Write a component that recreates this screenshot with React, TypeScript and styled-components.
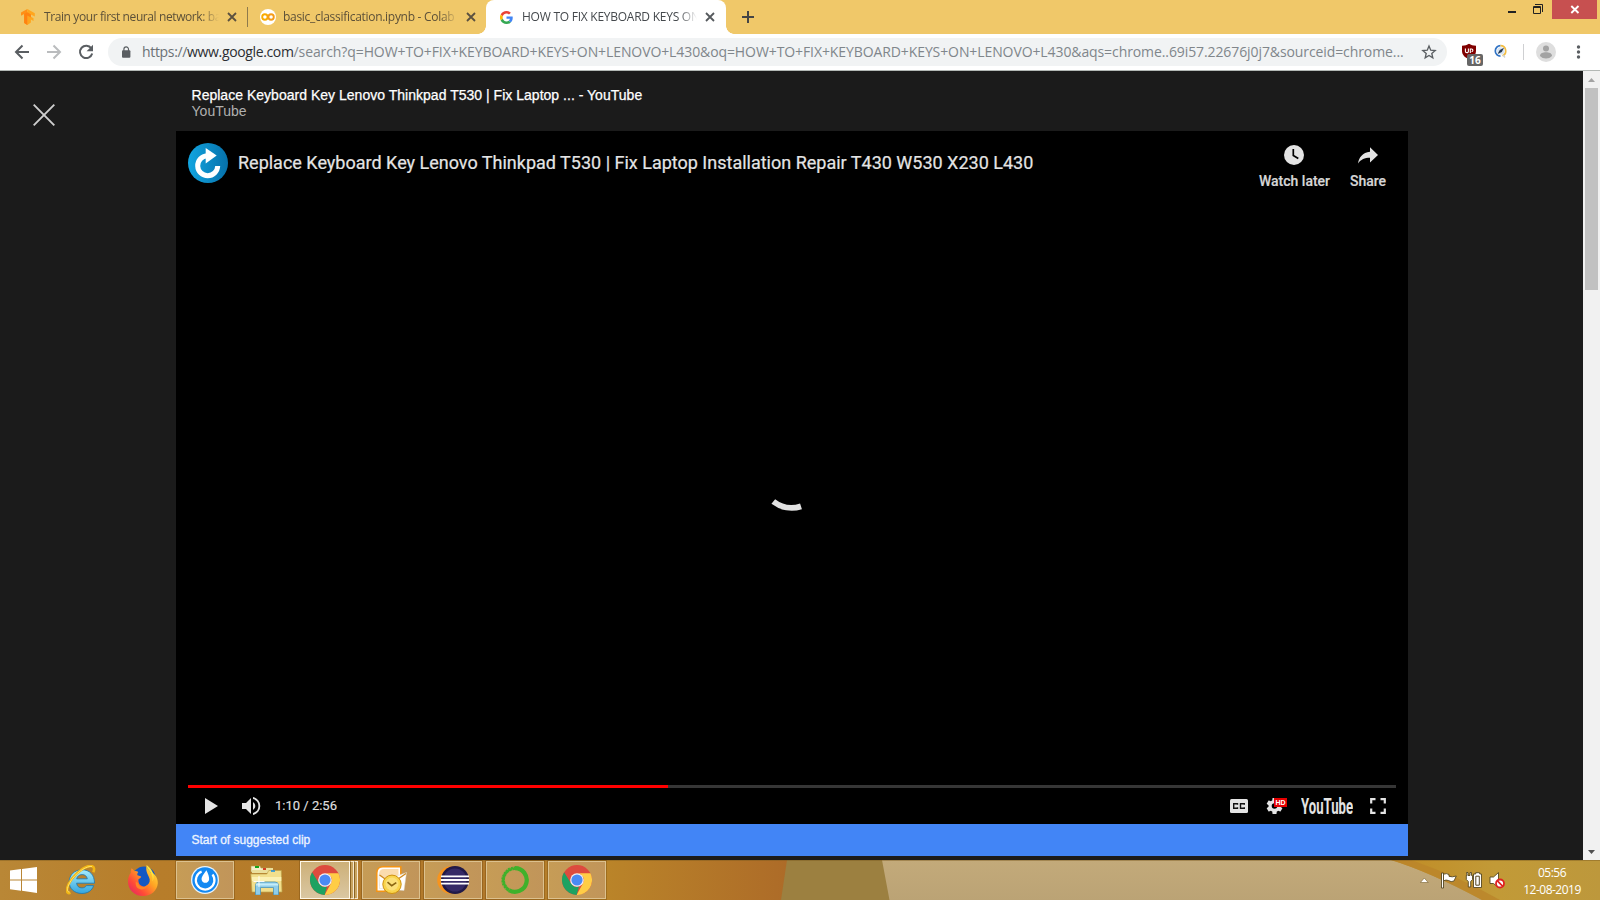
import React from 'react';
import styled, { createGlobalStyle } from 'styled-components';

const GlobalStyle = createGlobalStyle`
  * { box-sizing: border-box; }
  body { margin: 0; background: #1b1b1b; overflow: hidden; }
  svg { display: block; flex: none; }
`;

const UI_FONT = '"Open Sans", "Noto Sans", sans-serif';

const Screen = styled.div`
  width: 1600px;
  height: 900px;
  display: flex;
  flex-direction: column;
  overflow: hidden;
  font-family: ${UI_FONT};
`;

/* ---------- tab strip ---------- */
const TabStrip = styled.header`
  height: 34px;
  flex: none;
  display: flex;
  align-items: flex-start;
  background: #f0c869;
  padding-left: 8px;
`;

const Tab = styled.div<{ $active?: boolean; $width: number }>`
  position: relative;
  width: ${p => p.$width}px;
  height: 34px;
  display: flex;
  align-items: center;
  padding: 0 ${p => (p.$active ? 11 : 10)}px 0 ${p => (p.$active ? 14 : 12)}px;
  background: ${p => (p.$active ? '#fff' : 'transparent')};
  border-radius: 8px 8px 0 0;
  ${p => p.$active && `
    &::before, &::after {
      content: '';
      position: absolute;
      bottom: 0;
      width: 8px;
      height: 8px;
    }
    &::before { left: -8px; background: radial-gradient(circle at 0 0, transparent 7.5px, #fff 8px); }
    &::after { right: -8px; background: radial-gradient(circle at 100% 0, transparent 7.5px, #fff 8px); }
  `}
`;

const TabTitle = styled.span<{ $spacing: number; $gap: number; $active?: boolean }>`
  flex: 1;
  margin-left: ${p => p.$gap}px;
  margin-right: 8px;
  overflow: hidden;
  white-space: nowrap;
  font-size: 12px;
  line-height: 18px;
  letter-spacing: ${p => p.$spacing}px;
  color: ${p => (p.$active ? '#45494d' : '#5c5038')};
  mask-image: linear-gradient(90deg, #000 calc(100% - 18px), transparent);
`;

const TabDivider = styled.i`
  width: 1px;
  height: 20px;
  margin-top: 7px;
  background: #8e7a4c;
`;

const NewTab = styled.div`
  padding: 11px 0 0 16px;
`;

const WindowControls = styled.div`
  margin-left: auto;
  margin-right: 3px;
  display: flex;
`;

const WindowButton = styled.div<{ $width: number; $danger?: boolean }>`
  width: ${p => p.$width}px;
  height: 19px;
  display: flex;
  justify-content: center;
  background: ${p => (p.$danger ? '#c75050' : 'transparent')};
`;

/* ---------- toolbar ---------- */
const Toolbar = styled.div`
  height: 37px;
  flex: none;
  display: flex;
  align-items: center;
  background: #fff;
  border-bottom: 1px solid #b3b8b5;
  padding-left: 14px;
`;

const NavButtons = styled.div`
  width: 94px;
  display: flex;
  gap: 16px;
`;

const Omnibox = styled.div`
  width: 1339px;
  height: 28px;
  border-radius: 14px;
  background: #f1f3f4;
  display: flex;
  align-items: center;
  padding: 0 10px 0 13px;
`;

const Url = styled.div`
  flex: 1;
  margin-left: 11px;
  font-size: 14px;
  line-height: 20px;
  white-space: nowrap;
  color: #80868b;
  letter-spacing: -0.095px;
`;
const UrlScheme = styled.span`
  color: #6b7176;
  letter-spacing: -0.33px;
`;
const UrlHost = styled.span`
  color: #2c2e32;
  letter-spacing: -0.36px;
`;

const Extensions = styled.div`
  flex: none;
  display: flex;
  align-items: center;
  margin-left: 14px;
`;

const Shield = styled.div`
  position: relative;
  width: 16px;
  height: 16px;
  margin-top: -2px;
`;

const Badge = styled.span`
  position: absolute;
  left: 6px;
  top: 11px;
  width: 16px;
  height: 12px;
  border-radius: 2px;
  background: #666;
  color: #fff;
  font: 700 10px/12px ${UI_FONT};
  text-align: center;
`;

const ToolDivider = styled.i`
  width: 1px;
  height: 16px;
  margin: 0 12px 0 13px;
  background: #cfd0d2;
`;

/* ---------- page ---------- */
const Viewport = styled.main`
  flex: 1;
  display: flex;
  min-height: 0;
  background: #1b1b1b;
`;

const CloseColumn = styled.div`
  width: 176px;
  padding: 33px 0 0 33px;
`;

const Viewer = styled.section`
  width: 1232px;
  margin-right: auto;
`;

const ViewerHeading = styled.div`
  height: 60px;
  padding: 16px 0 0 15.5px;
  font: 14px/16px "Liberation Sans", Arial, sans-serif;
  letter-spacing: 0.02px;
`;
const ResultTitle = styled.div`
  color: #fff;
  -webkit-text-stroke: 0.25px #fff;
`;
const ResultSource = styled.div`
  color: #b0b0b0;
`;

const Player = styled.div`
  height: 693px;
  background: #000;
  display: flex;
  flex-direction: column;
  padding: 0 12px;
  color: #e4e4e4;
  font-family: Roboto, sans-serif;
`;

const PlayerTop = styled.div`
  display: flex;
  padding-top: 12px;
`;

const VideoTitle = styled.h1`
  margin: 0 auto 0 10px;
  font-size: 18px;
  font-weight: 400;
  line-height: 40px;
  white-space: nowrap;
  -webkit-text-stroke: 0.2px #e4e4e4;
`;

const TopActions = styled.div`
  display: flex;
  gap: 20px;
  padding: 2px 10px 0 0;
`;

const TopAction = styled.div<{ $width: number }>`
  width: ${p => p.$width}px;
  display: flex;
  flex-direction: column;
  align-items: center;
  font-size: 14px;
  font-weight: 500;
  line-height: 20px;
  white-space: nowrap;
  color: #d6d6d6;
  -webkit-text-stroke: 0.2px #d6d6d6;
`;

const Spinner = styled.div`
  flex: 1;
  display: flex;
  justify-content: center;
  padding-top: 255px;
`;

const Track = styled.div`
  height: 3px;
  background: #363636;
`;
const Played = styled.div`
  width: 480px;
  height: 3px;
  background: #f00;
`;

const Controls = styled.div`
  height: 36px;
  display: flex;
  align-items: center;
  padding: 0 10px 0 17px;
`;

const Time = styled.span`
  margin: -1px auto 0 14px;
  font-size: 13px;
  color: #dedede;
  -webkit-text-stroke: 0.2px #dedede;
`;

const Settings = styled.div`
  position: relative;
  margin: 0 18px 0 18px;
`;

const HdBadge = styled.span`
  position: absolute;
  left: 8px;
  top: 0;
  width: 13px;
  height: 9px;
  background: #e60000;
  color: #fff;
  font: 700 7px/9px "Liberation Sans", sans-serif;
  text-align: center;
`;

const ClipBar = styled.div`
  height: 32px;
  padding-left: 15.5px;
  background: #4285f6;
  color: #eef4ff;
  font: 12px/33px "Liberation Sans", Arial, sans-serif;
  -webkit-text-stroke: 0.3px #eef4ff;
`;

const ScrollBar = styled.div`
  width: 17px;
  display: flex;
  flex-direction: column;
  align-items: center;
  background: #f1f1f1;
`;
const ScrollArrow = styled.div`
  width: 17px;
  height: 17px;
  display: grid;
  place-items: center;
`;
const Thumb = styled.div`
  width: 13px;
  height: 202px;
  margin-bottom: auto;
  background: #c1c1c1;
`;

/* ---------- taskbar ---------- */
const TaskBar = styled.footer`
  position: relative;
  height: 40px;
  flex: none;
  display: flex;
  align-items: center;
`;

const Wallpaper = styled.svg`
  position: absolute;
  inset: 0;
`;

const Launchers = styled.nav`
  position: relative;
  display: flex;
  align-items: center;
`;

const Launcher = styled.div<{ $width: number; $shift?: number }>`
  width: ${p => p.$width}px;
  height: 40px;
  padding-right: ${p => p.$shift ?? 0}px;
  display: grid;
  place-items: center;
`;

const TaskButton = styled.div<{ $active?: boolean }>`
  width: ${p => (p.$active ? 50 : 58)}px;
  height: 38px;
  margin: 0 ${p => (p.$active ? 0 : 2)}px;
  display: grid;
  place-items: center;
  border: 1px solid ${p => (p.$active ? '#fff7e6' : '#dcc18e')};
  outline: 1px solid rgba(105, 66, 10, 0.35);
  background: ${p =>
    p.$active
      ? 'linear-gradient(180deg, #cdb078, #dac7a2)'
      : 'linear-gradient(90deg, #c69c56, #c1955a)'};
`;

const Stack = styled.div`
  display: flex;
  margin-right: 2px;
`;
const Sheet = styled.i`
  width: 4px;
  height: 38px;
  border: 1px solid #f7ead0;
  border-left-color: #8b6423;
  background: #c9a561;
`;

const Tray = styled.div`
  position: relative;
  margin-left: auto;
  margin-right: 6px;
  display: flex;
  align-items: center;
`;

const Clock = styled.div`
  width: 84px;
  margin-left: -2px;
  padding-top: 2px;
  text-align: center;
  font-size: 12px;
  line-height: 17px;
  letter-spacing: -0.5px;
  color: #fff;
`;

/* ---------- drawings ---------- */
const Cross = ({ size, color, w }: { size: number; color: string; w: number }) => (
  <svg width={size} height={size} viewBox="0 0 10 10">
    <path d="M1 1l8 8M9 1l-8 8" stroke={color} strokeWidth={w} />
  </svg>
);

const TensorFlow = () => (
  <svg width="16" height="16" viewBox="0 0 16 16">
    <path d="M7.4 0L1 3.6v3.2l3.200-1.700v9l3.200 1.900z" fill="#ff9016" />
    <path d="M7.400 0l7.400 4.200v3.300l-3.900-2.100v2.300l2.600 1.500v2.900l-2.600-1.500v2.900L7.400 16z" fill="#ffa61c" />
    <path d="M4.200 5.100L7.400 3.300 10.900 5.400v3L7.400 6.600v9.400L4.200 14z" fill="#ff8310" />
  </svg>
);

const Colab = () => (
  <svg width="16" height="16" viewBox="0 0 16 16">
    <circle cx="8" cy="8" r="8" fill="#fff" />
    <circle cx="4.900" cy="8" r="2.700" fill="none" stroke="#f9ab00" strokeWidth="1.900" />
    <circle cx="11.100" cy="8" r="2.700" fill="none" stroke="#f59c1a" strokeWidth="1.900" />
  </svg>
);

const GoogleG = () => (
  <svg width="13" height="13" viewBox="0 0 48 48">
    <path fill="#EA4335" d="M24 9.500c3.500 0 6.700 1.200 9.200 3.600l6.900-6.900C35.900 2.400 30.500 0 24 0 14.600 0 6.500 5.400 2.600 13.200l8 6.200C12.400 13.700 17.700 9.500 24 9.500z" />
    <path fill="#4285F4" d="M47 24.500c0-1.600-.2-3.100-.4-4.500H24v9h12.900c-.6 3-2.200 5.500-4.700 7.200l7.700 6C44.400 38 47 31.800 47 24.500z" />
    <path fill="#FBBC05" d="M10.500 28.600A14.500 14.500 0 0110.500 19.400l-8-6.200a24 24 0 000 21.600z" />
    <path fill="#34A853" d="M24 48c6.500 0 11.900-2.100 15.900-5.800l-7.700-6c-2.200 1.500-4.900 2.300-8.200 2.300-6.300 0-11.600-4.200-13.500-9.900l-8 6.200C6.500 42.600 14.600 48 24 48z" />
  </svg>
);

const Avatar = () => (
  <svg width="20" height="20" viewBox="0 0 20 20">
    <circle cx="10" cy="10" r="10" fill="#dedede" />
    <circle cx="10" cy="6.400" r="3" fill="#a3a3a3" />
    <path d="M4 14c0-3 3-3.800 6-3.800s6 .8 6 3.800c-1.500 1.700-3.600 2.500-6 2.500S5.500 15.700 4 14z" fill="#a3a3a3" />
  </svg>
);

const ChannelLogo = () => (
  <svg width="40" height="40" viewBox="0 0 40 40">
    <defs>
      <linearGradient id="chan" x1="0" y1="0" x2="1" y2="0">
        <stop offset="0" stopColor="#12a5e0" />
        <stop offset="1" stopColor="#0671ab" />
      </linearGradient>
    </defs>
    <circle cx="20" cy="20" r="20" fill="url(#chan)" />
    <path d="M19 12.700a10 10 0 1 0 10.700 10.300" fill="none" stroke="#fff" strokeWidth="5" />
    <path d="M17.700 5l11 7.600-11 8z" fill="#fff" />
  </svg>
);

const Chrome = () => (
  <svg width="30" height="30" viewBox="0 0 30 30">
    <circle cx="15" cy="15" r="15" fill="#dd4b3e" />
    <path d="M15 8.200H28.400A15 15 0 0 1 14.600 30L20.900 18.400A6.800 6.800 0 0 0 15 8.200z" fill="#ffcd46" />
    <path d="M2.100 7.300L9.100 18.400A6.800 6.800 0 0 0 17 21.500L14.600 30A15 15 0 0 1 2.100 7.300z" fill="#1da261" />
    <circle cx="15" cy="15" r="6.800" fill="#f3f3f3" />
    <circle cx="15" cy="15" r="5.600" fill="#4a8af4" />
  </svg>
);

const WindowsLogo = () => (
  <svg width="27" height="26" viewBox="0 0 27 26">
    <path d="M0 3.600L11 2v10.400H0zM12 1.900L27 0v12.400H12zM0 13.400h11v10.300L0 22.300zM12 13.400h15V26l-15-2.200z" fill="#fff" />
  </svg>
);

const Explorer = () => (
  <svg width="30" height="30" viewBox="0 0 30 30">
    <defs>
      <linearGradient id="ie" x1="0" y1="0" x2="0" y2="1">
        <stop offset="0" stopColor="#a5ecfd" />
        <stop offset="1" stopColor="#35a6df" />
      </linearGradient>
    </defs>
    <path d="M28.500 18.200H10.600c.4 3 2.300 4.700 5.300 4.700 2.200 0 3.700-.9 4.500-2.300h7.200c-1.500 5-5.800 7.900-11.700 7.900C8.300 28.500 3.200 23.600 3.200 16.800 3.200 9.900 8.700 4.800 16 4.800c7.700 0 12.500 5 12.500 13.400zM21.300 13.800c-.4-2.600-2.300-4.200-5.200-4.200s-4.900 1.600-5.400 4.200z" fill="url(#ie)" stroke="#1877b4" strokeWidth=".8" />
    <path d="M4.500 27.800C-.5 29.800-.3 22 6 13.700 12.500 5.200 22-.5 26.300 1.200c2.400 1 2 3.700 1 6" fill="none" stroke="#f2b614" strokeWidth="2.600" />
    <path d="M3.500 27C0 27 1 21 6.500 13.500 13 5.700 21 .8 26 1.500" fill="none" stroke="#ffe26a" strokeWidth="1" />
  </svg>
);

const Firefox = () => (
  <svg width="30" height="31" viewBox="0 0 30 31">
    <defs>
      <linearGradient id="ff" x1="1" y1="0" x2="0" y2="1">
        <stop offset="0" stopColor="#fff04a" />
        <stop offset=".4" stopColor="#ffa423" />
        <stop offset=".7" stopColor="#ff4a37" />
        <stop offset="1" stopColor="#d91b75" />
      </linearGradient>
    </defs>
    <circle cx="16" cy="13" r="11.500" fill="#1258c4" />
    <path d="M18.600 0c.2 3 2.200 5.300 4.200 7.600l1-.6C27 9.400 30 13 29.800 18.200 29.300 25.500 23 31 15 31 6.500 31 0 24.800 0 16.500 0 12 1.500 9.500 2.700 8 2.700 6 3 4.500 3.500 3.300 4.800 4 5.700 5 6.300 6.200c1.500-.3 2.800 0 4 .7-.8 1-1.200 2.200-.9 3.300l3.800 1.300c-.3 1.500-1.700 2-2.800 3-.3 4.500 2.800 7.700 6.900 6.700 3-1 4.700-3.500 4.400-6.600C21 9.700 17 8 18.600 0z" fill="url(#ff)" />
    <path d="M10 18c1 3 4 4.700 6.800 3.700 1.400-.5 2-1.600 3.200-1.700-1 3-4 5-7.500 4.200C8.500 23.500 7 20 8 16.500z" fill="#ff8425" />
    <path d="M18.600 0c.2 3 2.200 5.300 4.200 7.600 1.700 2.400 2.400 5.600 1.600 9C27 12 25.500 5 18.600 0z" fill="#ffe63d" />
  </svg>
);

const Mattermost = () => (
  <svg width="28" height="28" viewBox="0 0 28 28">
    <circle cx="14" cy="14" r="14" fill="#e9f3fa" />
    <circle cx="14" cy="14" r="12.700" fill="#1389f2" />
    <path d="M10.600 5.600A9.300 9.300 0 1 0 21.500 8.500" fill="none" stroke="#fff" strokeWidth="2.200" />
    <path d="M15.400 4.300c1.700 3.500 3.100 7 2.700 9.400-.8 4.300-7.100 4-7.500-.3-.2-3 2.500-5.400 4.800-9.100z" fill="#fff" />
  </svg>
);

const Folder = () => (
  <svg width="33" height="30" viewBox="0 0 33 30">
    <path d="M1 1h9l1 2h10v4H1z" fill="#f4eeca" stroke="#b29b4c" strokeWidth=".6" />
    <path d="M5 1h4v2H5z" fill="#13a51a" />
    <path d="M2 5h10l2-2h9v5H2z" fill="#eadf9b" />
    <path d="M13 3h3v2h-3z" fill="#d33d24" />
    <path d="M.8 9h16l2-3.500h12.500L32 27H2z" fill="#f2df8c" stroke="#bda34a" strokeWidth=".7" />
    <path d="M1.800 12h29.500v4H2z" fill="#fbf1b3" />
    <path d="M21 5.200h4v1.600h-4z" fill="#2492dc" />
    <path d="M5.500 30V20.500q0-3.500 3.500-3.500h16q3.500 0 3.500 3.500V30h-5v-7.500h-13V30z" fill="#8fcdea" stroke="#4d94b8" strokeWidth=".8" />
    <path d="M6 18.500h22v2H6z" fill="#c4ecf9" />
    <path d="M9 11v11M3.500 16.500h11" stroke="#fff" strokeWidth=".9" />
  </svg>
);

const Outlook = () => (
  <svg width="31" height="28" viewBox="0 0 31 28">
    <path d="M.8 25.200V7Q1 .8 7 .8h17.800V20L8 25.200z" fill="#fff" stroke="#f49413" strokeWidth="1.500" />
    <path d="M3 20V8q.5-5 5-5h14.500v6z" fill="#fbdcae" />
    <path d="M3 8.500l8 5L30.500 6.500l-2.500 18L3.500 22.500z" fill="#fff" stroke="#d8d2c6" strokeWidth=".5" />
    <path d="M3.500 9l12 8.500L30 7.500" fill="none" stroke="#d18a1c" strokeWidth="1.400" />
    <circle cx="16" cy="18.300" r="9.200" fill="#f9d44c" stroke="#cf920f" strokeWidth="1" />
    <circle cx="16" cy="18" r="6.500" fill="#fbe07a" />
    <path d="M11.500 16.200l4.200 3.500 4.600-3" fill="none" stroke="#8a6511" strokeWidth="1.600" />
  </svg>
);

const Eclipse = () => (
  <svg width="32" height="28" viewBox="0 0 32 28">
    <circle cx="14" cy="14" r="13.800" fill="#f7941e" />
    <circle cx="18" cy="14" r="14" fill="#211a48" />
    <circle cx="18" cy="14" r="11.500" fill="#352b66" />
    <path d="M4 9.500h28v1.800H4zM3.800 13h28.400v2H3.800zM4 16.700h28v1.800H4z" fill="#fff" />
  </svg>
);

const Anaconda = () => (
  <svg width="28" height="28" viewBox="0 0 28 28">
    <path d="M14 2.200a11.800 11.800 0 1 1-6 22" fill="none" stroke="#3fb12b" strokeWidth="4.200" />
    <path d="M14 2.200A11.800 11.800 0 0 0 8 24.200" fill="none" stroke="#3fb12b" strokeWidth="3.600" />
    <path d="M13 .9A13 13 0 0 0 6 24.500" fill="none" stroke="#bd9657" strokeWidth="1.200" strokeDasharray="1.300 1.900" />
    <path d="M12 4A10.500 10.500 0 0 0 6.500 21" fill="none" stroke="#bd9657" strokeWidth="1" strokeDasharray="1 2.400" />
  </svg>
);

const TaskbarWallpaper = () => (
  <Wallpaper width="1600" height="40" viewBox="0 0 1600 40">
    <defs>
      <linearGradient id="wl" x1="0" y1="0" x2="1" y2="0">
        <stop offset="0" stopColor="#b98736" />
        <stop offset=".2" stopColor="#b77d2a" />
        <stop offset=".62" stopColor="#b1792b" />
        <stop offset=".77" stopColor="#ba8429" />
        <stop offset="1" stopColor="#ad6b28" />
      </linearGradient>
      <linearGradient id="wb" x1="0" y1="0" x2="0" y2="1">
        <stop offset="0" stopColor="#c3aa7a" />
        <stop offset="1" stopColor="#bba375" />
      </linearGradient>
      <linearGradient id="wr" x1="0" y1="0" x2="1" y2="0">
        <stop offset="0" stopColor="#c08b25" />
        <stop offset=".5" stopColor="#c29a37" />
        <stop offset="1" stopColor="#bd983c" />
      </linearGradient>
    </defs>
    <rect width="790" height="40" fill="url(#wl)" />
    <path d="M787 0h98l6 40H781z" fill="#9c8040" />
    <path d="M882 0h718v40H889.500z" fill="url(#wb)" />
    <path d="M1391 0H1600V40H1482Q1430 12 1391 0z" fill="url(#wr)" />
    <path d="M1391 0h20Q1460 17 1500 40h-18Q1430 12 1391 0z" fill="#ba842a" opacity=".8" />
    <path d="M0 .5H1600" stroke="#7c5a20" strokeOpacity=".45" />
  </Wallpaper>
);

export default function App() {
  return (
    <Screen>
      <GlobalStyle />
      <TabStrip>
        <Tab $width={239}>
          <TensorFlow />
          <TabTitle $spacing={-0.4} $gap={8}>Train your first neural network: ba</TabTitle>
          <Cross size={10} color="#5b5140" w={1.8} />
        </Tab>
        <TabDivider />
        <Tab $width={238}>
          <Colab />
          <TabTitle $spacing={-0.29} $gap={7}>basic_classification.ipynb - Colab</TabTitle>
          <Cross size={10} color="#5b5140" w={1.8} />
        </Tab>
        <Tab $width={240} $active>
          <GoogleG />
          <TabTitle $spacing={-0.25} $gap={9} $active>HOW TO FIX KEYBOARD KEYS ON</TabTitle>
          <Cross size={10} color="#55595d" w={1.8} />
        </Tab>
        <NewTab>
          <svg width="12" height="12" viewBox="0 0 12 12">
            <path d="M6 0v12M0 6h12" stroke="#454545" strokeWidth="2" />
          </svg>
        </NewTab>
        <WindowControls>
          <WindowButton $width={26}>
            <svg width="26" height="19" viewBox="0 0 26 19">
              <path d="M9 11h8v2H9z" fill="#222" />
            </svg>
          </WindowButton>
          <WindowButton $width={27}>
            <svg width="27" height="19" viewBox="0 0 27 19">
              <path d="M8.500 6.500h7v7h-7zM8 7.500h8" fill="none" stroke="#222" />
              <path d="M10 4.500h7.500V12" fill="none" stroke="#222" />
            </svg>
          </WindowButton>
          <WindowButton $width={45} $danger>
            <svg width="45" height="19" viewBox="0 0 45 19">
              <path d="M19.300 6l7.200 7M26.500 6l-7.200 7" stroke="#fff" strokeWidth="1.900" />
            </svg>
          </WindowButton>
        </WindowControls>
      </TabStrip>

      <Toolbar>
        <NavButtons>
          <svg width="16" height="16" viewBox="0 0 16 16">
            <path d="M15 8H2.200M8.500 1.500L2 8l6.500 6.500" fill="none" stroke="#5a5e62" strokeWidth="2" />
          </svg>
          <svg width="16" height="16" viewBox="0 0 16 16">
            <path d="M1 8h12.800M7.500 1.500L14 8l-6.500 6.500" fill="none" stroke="#babcbe" strokeWidth="2" />
          </svg>
          <svg width="16" height="16" viewBox="0 0 16 16">
            <path d="M13.300 4.300A6.200 6.200 0 1 0 14.200 9.500" fill="none" stroke="#5a5e62" strokeWidth="2" />
            <path d="M15 .8v6.400H8.600z" fill="#5a5e62" />
          </svg>
        </NavButtons>
        <Omnibox>
          <svg width="10" height="12" viewBox="0 0 10 12">
            <rect x="1" y="4.300" width="8.400" height="7.500" rx="1" fill="#5a5e62" />
            <path d="M2.900 5V3.200a2.300 2.300 0 0 1 4.600 0V5" fill="none" stroke="#5a5e62" strokeWidth="1.200" />
          </svg>
          <Url>
            <UrlScheme>https://</UrlScheme>
            <UrlHost>www.google.com</UrlHost>
            /search?q=HOW+TO+FIX+KEYBOARD+KEYS+ON+LENOVO+L430&amp;oq=HOW+TO+FIX+KEYBOARD+KEYS+ON+LENOVO+L430&amp;aqs=chrome..69i57.22676j0j7&amp;sourceid=chrome...
          </Url>
          <svg width="16" height="16" viewBox="0 0 24 24">
            <path d="M12 3l2.600 6.200 6.700.6-5.100 4.400 1.500 6.600L12 17.300l-5.700 3.500 1.500-6.600-5.100-4.400 6.700-.6z" fill="none" stroke="#5a5e62" strokeWidth="2" />
          </svg>
        </Omnibox>
        <Extensions>
          <Shield>
            <svg width="16" height="16" viewBox="0 0 16 16">
              <path d="M8 .8c2 1.300 4 1.900 7 1.900v5C15 12 12 14.500 8 16 4 14.500 1 12 1 7.700v-5C4 2.700 6 2.100 8 .8z" fill="#800000" />
              <path d="M4.400 5.500v2.700q0 1.400 1.500 1.400t1.500-1.400V5.500M9.300 10V6h1.300q1.300.2 1.300 1.300T10.600 8.700" fill="none" stroke="#fff" strokeWidth="1.100" />
            </svg>
            <Badge>16</Badge>
          </Shield>
          <svg width="33" height="16" viewBox="0 0 33 16">
            <g transform="translate(0 -2)">
              <path d="M23.500 3.700a5.200 5.200 0 0 0 0 10.400" fill="none" stroke="#2f72c4" strokeWidth="1.700" />
              <path d="M23.500 3.700a5.200 5.200 0 0 1 2 10" fill="none" stroke="#f3bd42" strokeWidth="1.700" />
              <circle cx="23.800" cy="8.900" r="3.700" fill="#d6e4f3" />
              <path d="M27 5.800l-2.200 4.300-4.200 2 2.200-4.200z" fill="#23364f" />
              <path d="M26 13l2 2.500" stroke="#ccd0d4" strokeWidth="1.300" />
            </g>
          </svg>
          <ToolDivider />
          <Avatar />
          <svg width="40" height="14" viewBox="0 0 40 14">
            <circle cx="22.500" cy="2" r="1.700" fill="#5a5e62" />
            <circle cx="22.500" cy="7" r="1.700" fill="#5a5e62" />
            <circle cx="22.500" cy="12" r="1.700" fill="#5a5e62" />
          </svg>
        </Extensions>
      </Toolbar>

      <Viewport>
        <CloseColumn>
          <svg width="22" height="22" viewBox="0 0 22 22">
            <path d="M.7.700l20.600 20.600M21.300.700L.7 21.300" stroke="#cfcfcf" strokeWidth="1.900" />
          </svg>
        </CloseColumn>
        <Viewer>
          <ViewerHeading>
            <ResultTitle>Replace Keyboard Key Lenovo Thinkpad T530 | Fix Laptop ... - YouTube</ResultTitle>
            <ResultSource>YouTube</ResultSource>
          </ViewerHeading>
          <Player>
            <PlayerTop>
              <ChannelLogo />
              <VideoTitle>Replace Keyboard Key Lenovo Thinkpad T530 | Fix Laptop Installation Repair T430 W530 X230 L430</VideoTitle>
              <TopActions>
                <TopAction $width={71}>
                  <svg width="22" height="26" viewBox="0 0 22 26">
                    <circle cx="10" cy="10" r="10" fill="#e4e4e4" />
                    <path d="M9.300 4v6.600l5 3" fill="none" stroke="#000" strokeWidth="1.700" />
                  </svg>
                  Watch later
                </TopAction>
                <TopAction $width={36}>
                  <svg width="20" height="26" viewBox="0 0 20 26">
                    <path d="M12 2.200L20 10l-8 7.500v-4.700C6.500 12.800 3 14.500 0 18.500 1 12.500 4.500 7.700 12 6.800z" fill="#e4e4e4" />
                  </svg>
                  Share
                </TopAction>
              </TopActions>
            </PlayerTop>
            <Spinner>
              <svg width="64" height="68" viewBox="0 0 64 68">
                <path d="M13.300 55.500A30 30 0 0 0 41 60.300" fill="none" stroke="#e2e2e2" strokeWidth="6" />
              </svg>
            </Spinner>
            <Track><Played /></Track>
            <Controls>
              <svg width="13" height="16" viewBox="0 0 13 16">
                <path d="M0 0l13 8-13 8z" fill="#e4e4e4" />
              </svg>
              <svg width="43" height="18" viewBox="0 0 43 18">
                <g transform="translate(24 0)" fill="#e4e4e4">
                  <path d="M0 6v6h4l5 5V1L4 6zM11 4.900v8.200q2.300-1.300 2.300-4.100T11 4.900zM11 0v2.100a7.100 7.100 0 0 1 0 13.800V18a9.200 9.200 0 0 0 0-18z" />
                </g>
              </svg>
              <Time>1:10 / 2:56</Time>
              <svg width="18" height="14" viewBox="0 0 18 14">
                <rect width="18" height="14" rx="1.500" fill="#e4e4e4" />
                <path d="M7.500 5.800V4.700H3.700v4.600h3.800V8.200M14.300 5.800V4.700h-3.800v4.600h3.800V8.200" fill="none" stroke="#111" strokeWidth="1.400" />
              </svg>
              <Settings>
                <svg width="17" height="16" viewBox="2 2 20 20">
                  <path d="M19.400 13c0-.3.100-.6.100-1s0-.7-.1-1l2.100-1.600c.2-.2.300-.4.100-.6l-2-3.500c-.1-.2-.4-.3-.6-.2l-2.500 1c-.5-.4-1.100-.7-1.700-1L14.500 2.400c0-.2-.2-.4-.5-.4h-4c-.3 0-.5.200-.5.400l-.3 2.700c-.6.200-1.200.6-1.700 1l-2.500-1c-.2-.1-.5 0-.6.200l-2 3.500c-.1.200-.1.500.1.600L4.600 11c0 .3-.1.600-.1 1s0 .7.100 1l-2.100 1.600c-.2.200-.3.400-.1.600l2 3.500c.1.200.4.300.6.200l2.500-1c.5.400 1.100.7 1.700 1l.3 2.700c0 .2.200.4.500.4h4c.3 0 .5-.2.500-.4l.4-2.700c.6-.3 1.200-.6 1.700-1l2.500 1c.2.100.5 0 .6-.2l2-3.500c.1-.2.100-.5-.1-.6zM12 15.500a3.500 3.500 0 1 1 0-7 3.500 3.500 0 0 1 0 7z" fill="#e4e4e4" />
                </svg>
                <HdBadge>HD</HdBadge>
              </Settings>
              <svg width="52" height="18" viewBox="0 0 52 18">
                <text x="0" y="17" textLength="52" lengthAdjust="spacingAndGlyphs" fontFamily="Roboto, sans-serif" fontWeight="700" fontSize="22" fill="#e4e4e4">YouTube</text>
              </svg>
              <svg width="33" height="16" viewBox="0 0 33 16">
                <path d="M18.200 5.500V1.200h4.300M27.500 1.200h4.300v4.300M31.800 10.500v4.300h-4.300M22.500 14.800h-4.300v-4.300" fill="none" stroke="#e4e4e4" strokeWidth="2.200" />
              </svg>
            </Controls>
          </Player>
          <ClipBar>Start of suggested clip</ClipBar>
        </Viewer>
        <ScrollBar>
          <ScrollArrow>
            <svg width="7" height="4" viewBox="0 0 7 4"><path d="M3.500 0L7 4H0z" fill="#a3a3a3" /></svg>
          </ScrollArrow>
          <Thumb />
          <ScrollArrow>
            <svg width="7" height="4" viewBox="0 0 7 4"><path d="M3.500 4L7 0H0z" fill="#505050" /></svg>
          </ScrollArrow>
        </ScrollBar>
      </Viewport>

      <TaskBar>
        <TaskbarWallpaper />
        <Launchers>
          <Launcher $width={48} $shift={1}><WindowsLogo /></Launcher>
          <Launcher $width={65}><Explorer /></Launcher>
          <Launcher $width={61} $shift={2}><Firefox /></Launcher>
          <TaskButton><Mattermost /></TaskButton>
          <Launcher $width={64} $shift={3}><Folder /></Launcher>
          <TaskButton $active><Chrome /></TaskButton>
          <Stack><Sheet /><Sheet /></Stack>
          <TaskButton><Outlook /></TaskButton>
          <TaskButton><Eclipse /></TaskButton>
          <TaskButton><Anaconda /></TaskButton>
          <TaskButton><Chrome /></TaskButton>
        </Launchers>
        <Tray>
          <svg width="92" height="24" viewBox="0 0 92 24">
            <path d="M.4 14.500l3.900-4.500 3.900 4.500z" fill="#fff" stroke="#77602e" strokeWidth=".6" />
            <g fill="#fff" stroke="#56471f" strokeWidth=".9">
              <path d="M21.500 5h2v15h-2z" />
              <path d="M23.500 6.200q3-1.300 5.500.3v1.800q3 1.200 7.300-.3l-2.300 5q-3 1.500-5.500-.5-2.500-1-5 .3z" />
              <path d="M46.500 4.500h1.500v3h2V4.500h1.500v3h1v4l-1.800 2V19h-2.400v-5.500l-2-2v-4h.700zM53.500 6h2.200V4.700h4V6H61.500v13.500h-8z" />
              <path d="M70 9h3.500l5-4.500v15L73.500 15.500H70z" />
            </g>
            <path d="M55.800 8.200h3.500v9h-3.500z" fill="none" stroke="#56471f" />
            <circle cx="80" cy="15.500" r="4" fill="#fff" stroke="#e02020" strokeWidth="1.800" />
            <path d="M77.200 12.700l5.600 5.600" stroke="#e02020" strokeWidth="1.700" />
          </svg>
          <Clock>05:56<br />12-08-2019</Clock>
        </Tray>
      </TaskBar>
    </Screen>
  );
}
